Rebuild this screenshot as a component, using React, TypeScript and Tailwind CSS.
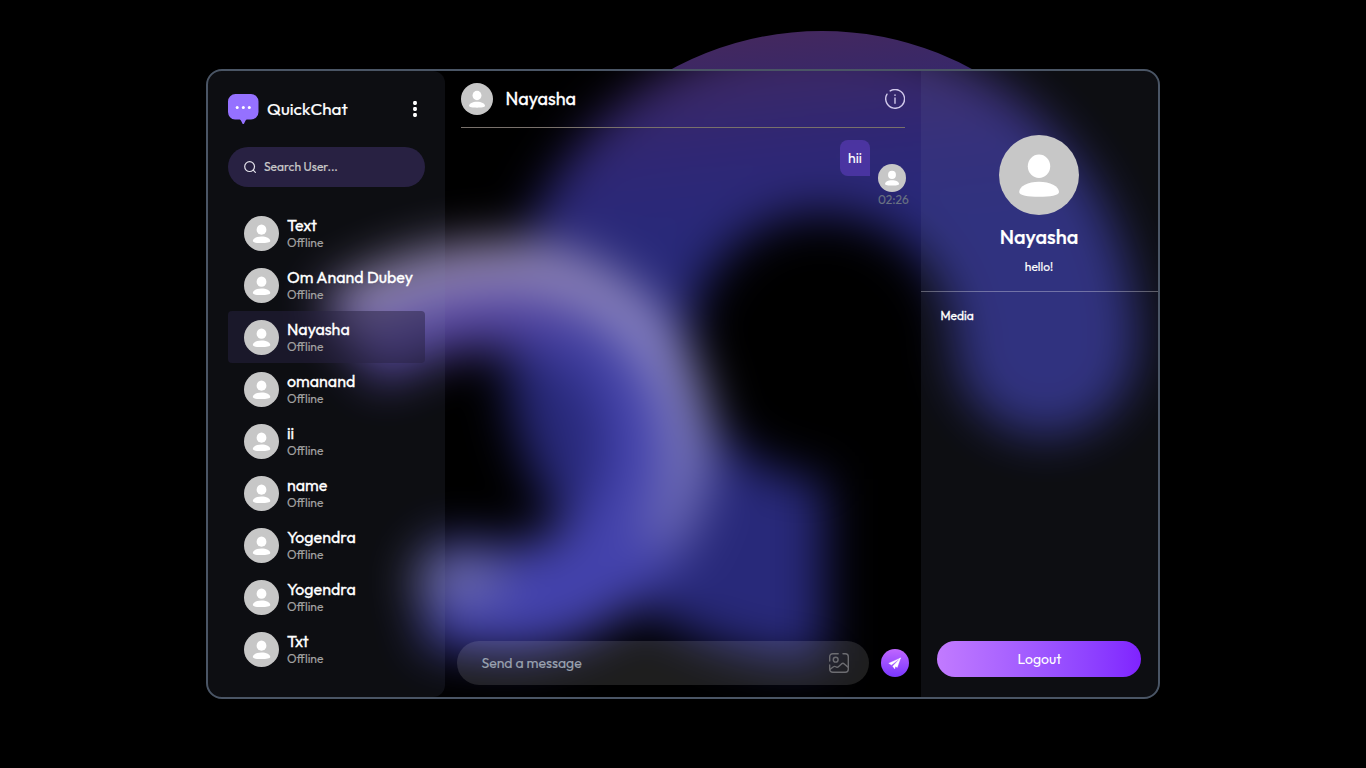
import React from "react";

const users = [
  { name: "Text" },
  { name: "Om Anand Dubey" },
  { name: "Nayasha", selected: true },
  { name: "omanand" },
  { name: "ii" },
  { name: "name" },
  { name: "Yogendra" },
  { name: "Yogendra" },
  { name: "Txt" },
];

function Avatar({ className }: { className: string }) {
  return (
    <svg viewBox="0 0 80 80" className={`shrink-0 ${className}`}>
      <circle cx="40" cy="40" r="40" fill="#c7c7c7" />
      <ellipse cx="40" cy="31.3" rx="11.2" ry="11.7" fill="#fff" />
      <path d="M20.200 57C20.200 51 29 46.700 40 46.700S60 51 60 57C60 60.500 51 61.700 40 61.700S20.200 60.500 20.200 57Z" fill="#fff" />
    </svg>
  );
}

function Artwork({ className }: { className: string }) {
  return (
    <svg viewBox="0 0 1366 768" className={`absolute h-[768px] w-[1366px] max-w-none ${className}`} fill="none">
      <defs>
        <linearGradient id="arch" gradientUnits="userSpaceOnUse" x1="785" y1="20" x2="807" y2="225">
          <stop offset="0" stopColor="#46285c" />
          <stop offset="0.25" stopColor="#3b2866" />
          <stop offset="0.6" stopColor="#2f2775" />
          <stop offset="1" stopColor="#28297a" />
        </linearGradient>
        <linearGradient id="swirl" gradientUnits="userSpaceOnUse" x1="430" y1="270" x2="570" y2="470">
          <stop offset="0" stopColor="#5a469e" />
          <stop offset="0.35" stopColor="#5042a0" />
          <stop offset="0.65" stopColor="#403fa2" />
          <stop offset="1" stopColor="#4342ac" />
        </linearGradient>
        <linearGradient id="rim" gradientUnits="userSpaceOnUse" x1="480" y1="240" x2="640" y2="600">
          <stop offset="0" stopColor="#9487b0" />
          <stop offset="0.4" stopColor="#8b86c4" />
          <stop offset="0.7" stopColor="#7876b8" />
          <stop offset="1" stopColor="#5553ae" />
        </linearGradient>
      </defs>
      <path d="M1042 346A220 220 0 1 0 822 566H824" stroke="url(#arch)" strokeWidth="190" strokeOpacity="0" />
      <path d="M1046 346A224 224 0 1 0 822 570H824" stroke="url(#arch)" strokeWidth="182" />
      <path d="M955 345a91 91 0 0 0 182 0Z" fill="#28297a" />
      <path d="M350 344C394 310 450 294 505 294A152.500 152.500 0 0 1 505 599L428 592" stroke="url(#swirl)" strokeWidth="106" />
      <path d="M343 312C390 281 450 267 505 267A180 180 0 0 1 656 548" stroke="url(#rim)" strokeWidth="50" />
      <path d="M434 579H484" stroke="#6d6ca8" strokeWidth="42" strokeLinecap="round" />
    </svg>
  );
}

function Sidebar() {
  return (
    <aside className="relative h-full rounded-r-xl bg-[#8185B2]/10 p-5">
      <div className="flex h-9 items-center">
        <svg viewBox="0 0 31 31" className="h-[31px] w-[31px]">
          <path d="M7.500 0H23a7.500 7.500 0 0 1 7.500 7.500V18a7.500 7.500 0 0 1-7.500 7.500h-3.500c-1.300 0-1.800.7-2.300 1.700l-1.100 2.200c-.4.800-1.300.8-1.700 0l-1.100-2.200c-.5-1-1-1.700-2.300-1.700h-4A7.500 7.500 0 0 1 0 18V7.500A7.500 7.500 0 0 1 7.500 0Z" fill="#9571ff" />
          <circle cx="9.200" cy="13.500" r="1.500" fill="#fff" />
          <circle cx="15.300" cy="13.500" r="1.500" fill="#fff" />
          <circle cx="21.300" cy="13.500" r="1.500" fill="#fff" />
        </svg>
        <span className="ml-2 text-[17px] leading-6 tracking-[0.05px] [-webkit-text-stroke:0.2px]">QuickChat</span>
        <svg viewBox="0 0 20 20" className="ml-auto h-5 w-5" fill="#fff">
          <rect x="8.100" y="2.100" width="3.800" height="3.800" rx="1.300" />
          <rect x="8.100" y="8.100" width="3.800" height="3.800" rx="1.300" />
          <rect x="8.100" y="14.100" width="3.800" height="3.800" rx="1.300" />
        </svg>
      </div>
      <div className="mt-5 flex h-10 items-center gap-2 rounded-full bg-[#282142] px-4">
        <svg viewBox="0 0 12 12" className="h-3 w-3" fill="none" stroke="#e4e2ea" strokeWidth="1.200" strokeLinecap="round">
          <circle cx="5.600" cy="5.600" r="4.900" />
          <path d="m9.200 9.200 2.200 2.200" />
        </svg>
        <span className="text-xs text-[#c8c8c8] [-webkit-text-stroke:0.2px]">Search User...</span>
      </div>
      <div className="mt-5 flex flex-col">
        {users.map((u, i) => (
          <div key={i} className={`flex h-[52px] items-center gap-2 rounded pl-4 ${u.selected ? "bg-[#282142]/50" : ""}`}>
            <Avatar className="h-[35px] w-[35px]" />
            <div className="flex flex-col">
              <p className="text-base leading-5 whitespace-nowrap [-webkit-text-stroke:0.3px]">{u.name}</p>
              <span className="text-xs text-neutral-400 [-webkit-text-stroke:0.15px]">Offline</span>
            </div>
          </div>
        ))}
      </div>
    </aside>
  );
}

function Chat() {
  return (
    <main className="relative flex h-full flex-col">
      <header className="mx-4 flex items-center gap-3 border-b border-stone-500 py-3">
        <Avatar className="h-8 w-8" />
        <p className="flex-1 pl-[0.500px] text-lg leading-7 [-webkit-text-stroke:0.3px]">Nayasha</p>
        <svg viewBox="0 0 20 20" className="h-5 w-5" fill="none" stroke="#d0c8ea" strokeWidth="1.400" strokeLinecap="round">
          <path d="M5.200 1.900A9.400 9.400 0 1 1 2 5.200" />
          <path d="M10 9v5.200" />
          <path d="M10 6v.2" strokeWidth="1.600" />
        </svg>
      </header>
      <div className="flex flex-1 items-start justify-end pt-3 pr-3">
        <p className="mr-2 rounded-lg rounded-br-none bg-violet-500/30 p-2 text-sm leading-5 [-webkit-text-stroke:0.1px]">hii</p>
        <div className="mt-6 flex w-[31px] flex-col">
          <Avatar className="h-7 w-7" />
          <span className="text-xs leading-4 whitespace-nowrap text-gray-500 [-webkit-text-stroke:0.1px]">02:26</span>
        </div>
      </div>
      <footer className="flex items-center gap-3 p-3">
        <div className="flex h-11 flex-1 items-center rounded-full bg-gray-100/12 pr-5 pl-6">
          <span className="flex-1 pl-[0.500px] text-sm text-gray-400 [-webkit-text-stroke:0.15px]">Send a message</span>
          <svg viewBox="0 0 20 20" className="h-5 w-5" fill="none" stroke="#6c6c71" strokeWidth="1.400" strokeLinecap="round" strokeLinejoin="round">
            <path d="M.7 8V3.700a3 3 0 0 1 3-3h5.500M14 .7h2.300a3 3 0 0 1 3 3v12.600a3 3 0 0 1-3 3H3.700a3 3 0 0 1-3-3V12" />
            <circle cx="6.700" cy="6.700" r="2.400" />
            <path d="m1.200 16.300 3.300-2.500c.8-.6 1.600-.5 2.300 0 1 .7 1.800.7 2.600-.1l3.100-2.800c1-.8 1.900-.8 2.800 0l3.700 3.200" />
          </svg>
        </div>
        <svg viewBox="0 0 28 28" className="h-7 w-7">
          <defs>
            <linearGradient id="send" x1="0" y1="0" x2="0" y2="1">
              <stop stopColor="#c067ff" />
              <stop offset="1" stopColor="#7936ff" />
            </linearGradient>
          </defs>
          <circle cx="14" cy="14" r="14" fill="url(#send)" />
          <path d="M19.600 8.900 7.700 14.300l2.700 1.800ZM19.600 8.900l-8 8.300 2.200 2.800.5-2.600ZM19.600 8.900l-6.300 7.900 3 1.700Z" fill="#fff" stroke="#fff" strokeWidth=".3" strokeLinejoin="round" />
        </svg>
      </footer>
    </main>
  );
}

function Profile() {
  return (
    <aside className="relative flex h-full flex-col bg-[#8185B2]/10 pt-16 pb-5">
      <div className="flex w-[236px] flex-col items-center">
        <Avatar className="h-20 w-20" />
        <h1 className="mt-2 text-xl leading-7 font-medium [-webkit-text-stroke:0.2px]">Nayasha</h1>
        <p className="mt-2 text-xs leading-4 [-webkit-text-stroke:0.15px]">hello!</p>
      </div>
      <hr className="mt-4 border-[#ffffff50]" />
      <p className="mt-4 px-[19.500px] text-xs leading-4 [-webkit-text-stroke:0.3px]">Media</p>
      <button className="mt-auto ml-4 h-9 w-[204px] rounded-full bg-linear-to-r from-purple-400 to-violet-600 pl-px text-sm">Logout</button>
    </aside>
  );
}

export default function App() {
  return (
    <div className="relative flex h-[768px] w-[1366px] items-center justify-center overflow-hidden bg-black font-['Outfit','Lato',sans-serif] text-white">
      <Artwork className="inset-0" />
      <div className="relative grid h-[630px] w-[954px] grid-cols-[237px_476px_237px] overflow-hidden rounded-2xl border-2 border-gray-600 bg-black">
        <Artwork className="-top-[71px] -left-[208px] blur-xl" />
        <Sidebar />
        <Chat />
        <Profile />
      </div>
    </div>
  );
}
